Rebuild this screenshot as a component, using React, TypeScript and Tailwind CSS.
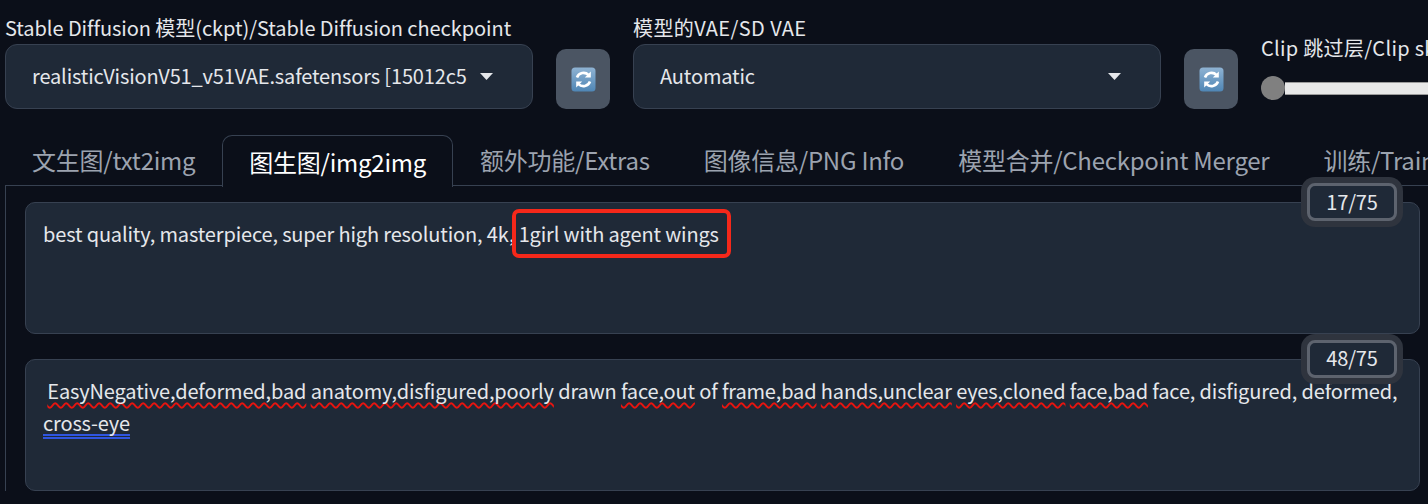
const fontFamily = "font-['Noto_Sans_CJK_SC','Noto_Sans',sans-serif]";

function RefreshButton() {
  return (
    <button className="mt-[5px] flex h-[60px] w-[54px] shrink-0 items-center justify-center rounded-[10px] bg-[#4b5563]">
      <svg width="25" height="25" viewBox="0 0 25 25">
        <defs>
          <linearGradient id="emoji" x1="0" y1="0" x2="0" y2="1">
            <stop offset="0" stopColor="#8fb3d3" />
            <stop offset="1" stopColor="#4f86b5" />
          </linearGradient>
        </defs>
        <rect x="0.5" y="0.5" width="24" height="24" rx="3.5" fill="url(#emoji)" />
        <path d="M6 10.5a7 7 0 0 1 11.5-2.6" fill="none" stroke="#fff" strokeWidth="2.6" />
        <path d="M19.8 4.6v6h-6z" fill="#fff" />
        <path d="M19 14.5a7 7 0 0 1-11.5 2.6" fill="none" stroke="#fff" strokeWidth="2.6" />
        <path d="M5.2 20.4v-6h6z" fill="#fff" />
      </svg>
    </button>
  );
}

function Dropdown({ label, labelClass, value, caretGap }: { label: string; labelClass: string; value: string; caretGap: string }) {
  return (
    <div className="w-[528px] shrink-0">
      <div className={`mb-[3px] h-[26px] text-[20px] leading-[26px] whitespace-nowrap text-[#e5e7eb] ${labelClass}`}>{label}</div>
      <div className="flex h-[65px] items-center rounded-[12px] border border-[#374151] bg-[#1f2937] pb-[2px] pl-[26px]">
        <span className="text-[20px] tracking-[-0.15px] whitespace-nowrap text-[#e5e7eb]">{value}</span>
        <svg className={`mt-[2px] ${caretGap}`} width="13" height="7" viewBox="0 0 13 7">
          <path d="M0 0h13L6.5 7z" fill="#e5e7eb" />
        </svg>
      </div>
    </div>
  );
}

function Counter({ text }: { text: string }) {
  return (
    <div className="absolute top-[-20px] right-[22px] flex h-[38px] w-[90px] items-center justify-center rounded-[8px] border-[3px] border-[#5d636e] bg-[#1f2937] pb-[2px] text-[20px] tracking-[-0.15px] text-[#e5e7eb] shadow-[0_0_0_6px_#2f343e]">
      {text}
    </div>
  );
}

const tabs = ["文生图/txt2img", "图生图/img2img", "额外功能/Extras", "图像信息/PNG Info", "模型合并/Checkpoint Merger", "训练/Train"];

export default function App() {
  const wavy = "underline decoration-wavy decoration-[#e8140f] decoration-[2px] underline-offset-[3px] [text-decoration-skip-ink:none]";
  return (
    <div className={`relative h-[504px] w-[1428px] overflow-hidden bg-[#0b0f19] ${fontFamily}`}>
      {/* top row */}
      <div className="flex pt-[15px] pl-[5px]">
        <Dropdown
          label="Stable Diffusion 模型(ckpt)/Stable Diffusion checkpoint"
          labelClass="tracking-[-0.06px]"
          value="realisticVisionV51_v51VAE.safetensors [15012c5"
          caretGap="ml-[13px]"
        />
        <div className="mx-[23px] mt-[29px]"><RefreshButton /></div>
        <Dropdown label="模型的VAE/SD VAE" labelClass="tracking-[0.4px]" value="Automatic" caretGap="ml-auto mr-[39px]" />
        <div className="mx-[23px] mt-[29px]"><RefreshButton /></div>
        <div className="w-[300px] shrink-0 pt-[18px]">
          <div className="text-[20px] leading-[30px] tracking-[0.3px] whitespace-nowrap text-[#e5e7eb]">Clip 跳过层/Clip skip</div>
          <div className="mt-[13px] flex items-center">
            <div className="h-[24px] w-[24px] rounded-full bg-[#808080]" />
            <div className="h-[13px] flex-1 border-y border-[#9b9b9b] bg-[#e8e8e8]" />
          </div>
        </div>
      </div>

      {/* tabs */}
      <div className="mt-[26px] ml-[5px] flex h-[51px] border-b border-[#374151] text-[24px] tracking-[-0.25px]">
        {tabs.map((tab, i) => (
          <div
            key={tab}
            className={
              i === 1
                ? "mb-[-1px] flex h-[52px] items-center rounded-t-[10px] border border-b-0 border-[#374151] bg-[#0b0f19] px-[26px] whitespace-nowrap text-white"
                : "flex items-center px-[27px] whitespace-nowrap text-[#9ca3af]"
            }
          >
            {tab}
          </div>
        ))}
      </div>

      {/* prompts */}
      <div className="ml-[5px] flex flex-col gap-[25px] border-l border-[#374151] pt-[16px] pr-[8px] pl-[19px]">
        <div className="relative h-[132px] rounded-[10px] border border-[#374151] bg-[#1f2937] px-[17px] py-[13px] text-[20px] leading-[35px] tracking-[-0.15px] text-[#e5e7eb]">
          <Counter text="17/75" />
          best quality, masterpiece, super high resolution, 4k,{" "}
          <span className="relative">
            1girl with agent wings
            <span className="absolute top-[-10px] right-[-12px] bottom-[-10px] left-[-7px] rounded-[7px] border-[4px] border-[#f5281a]" />
          </span>
        </div>
        <div className="relative h-[132px] rounded-[10px] border border-[#374151] bg-[#1f2937] px-[17px] py-[15px] text-[20px] leading-[32px] tracking-[-0.15px] text-[#e5e7eb]">
          <Counter text="48/75" />
          <span className="whitespace-pre"> </span>
          <span className={wavy}>EasyNegative,deformed,bad</span> <span className={wavy}>anatomy,disfigured,poorly</span> drawn{" "}
          <span className={wavy}>face,out</span> of <span className={wavy}>frame,bad</span> <span className={wavy}>hands,unclear</span>{" "}
          <span className={wavy}>eyes,cloned</span> <span className={wavy}>face,bad</span> face, disfigured, deformed,{" "}
          <span className="underline decoration-double decoration-[#2f55e0] decoration-[2px] underline-offset-[3px] [text-decoration-skip-ink:none]">cross-eye</span>
        </div>
      </div>
    </div>
  );
}
